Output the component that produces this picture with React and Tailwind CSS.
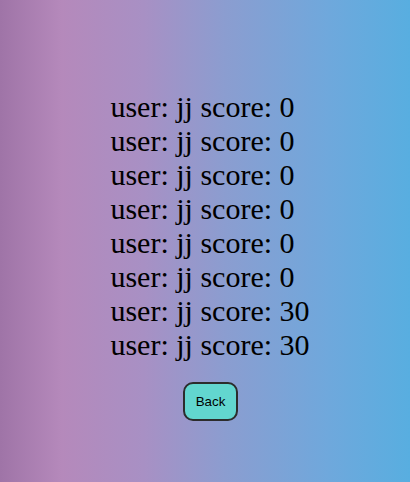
import React from 'react';

const scores = [
  { user: 'jj', score: 0 },
  { user: 'jj', score: 0 },
  { user: 'jj', score: 0 },
  { user: 'jj', score: 0 },
  { user: 'jj', score: 0 },
  { user: 'jj', score: 0 },
  { user: 'jj', score: 30 },
  { user: 'jj', score: 30 },
];

const App = () => {
  return (
    <div className="min-h-[482px] w-full bg-[linear-gradient(to_right,#9f74a7_0%,#b589bb_15%,#a890c4_35%,#8b9dd0_55%,#6fa8dc_80%,#58aee0_100%)] pt-[90px] pl-[10px] flex flex-col items-center">
      <div className="text-left text-black font-['Liberation_Serif','Times_New_Roman',serif] text-[30px] leading-[34px]">
        {scores.map((s, i) => (
          <div key={i}>
            user: {s.user} score: {s.score}
          </div>
        ))}
      </div>
      <button
        type="button"
        className="mt-[20px] h-[39px] w-[55px] rounded-[10px] border-2 border-[#2c2c2c] bg-[#62d6cf] text-[13.33px] text-black font-['Liberation_Sans',Arial,sans-serif] pl-[1px]"
      >
        Back
      </button>
    </div>
  );
};

export default App;
